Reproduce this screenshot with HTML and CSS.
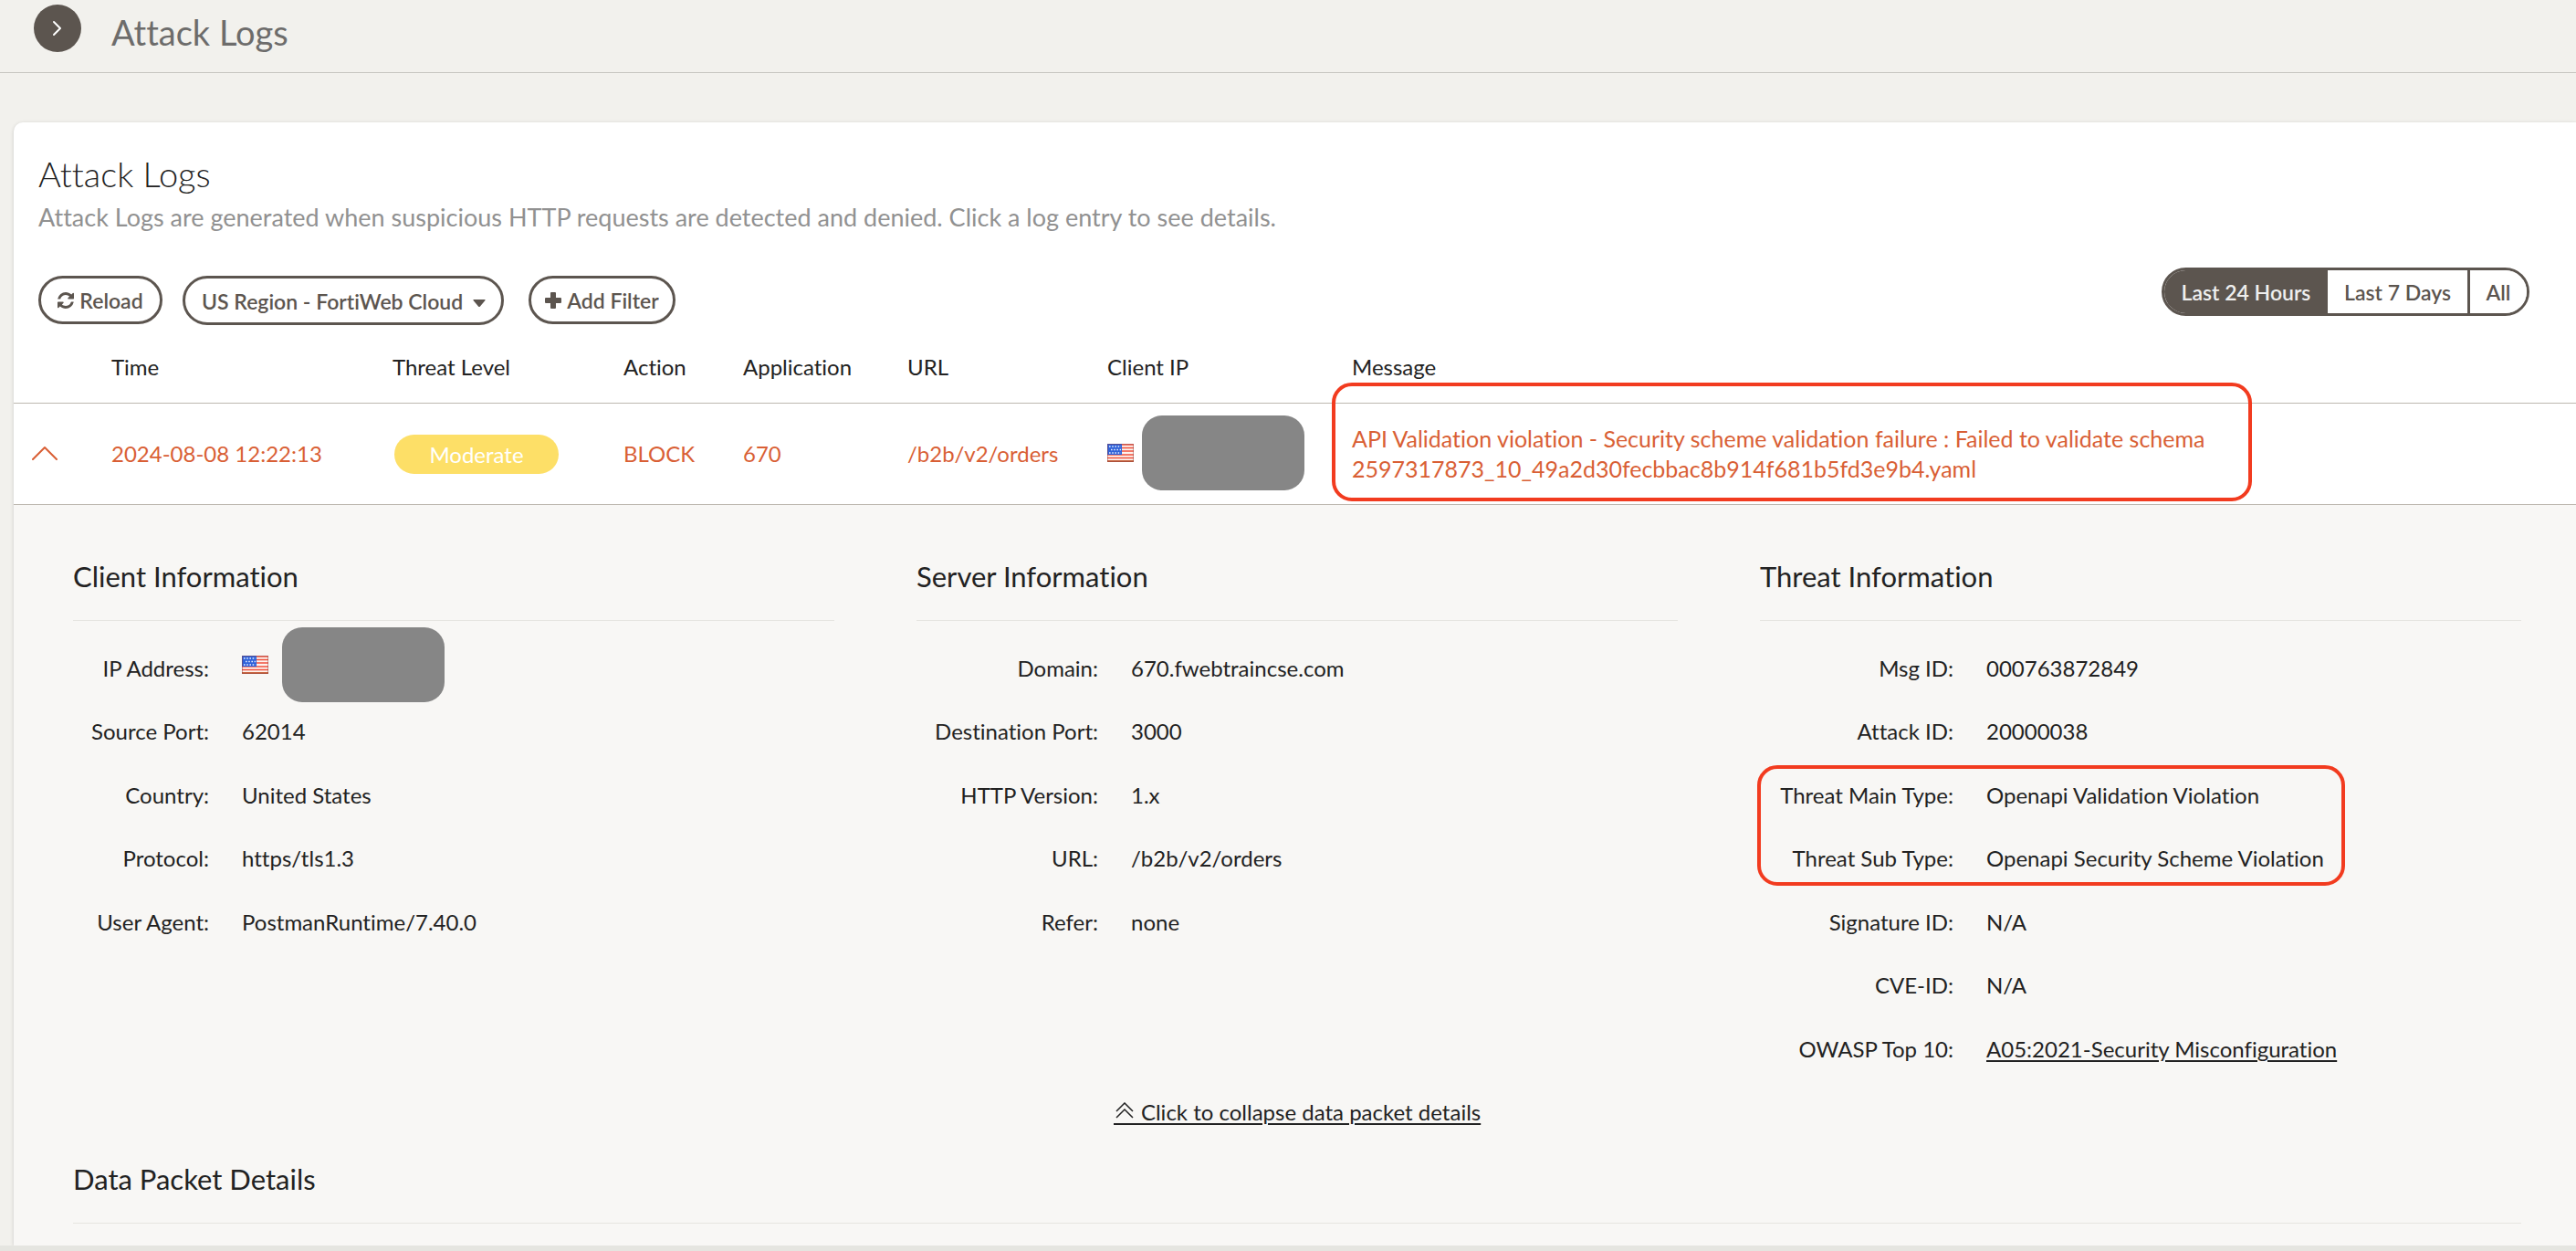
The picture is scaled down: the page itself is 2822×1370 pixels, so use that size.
FILE: index.html
```html
<!DOCTYPE html>
<html lang="en">
<head>
<meta charset="utf-8">
<meta name="viewport" content="width=device-width, initial-scale=1">
<title>Attack Logs</title>
<link rel="stylesheet" href="styles.css">
</head>
<body>
<svg class="sprite" aria-hidden="true">
  <symbol id="flag-us" viewBox="0 0 29 20">
    <rect width="29" height="20" fill="#fdf3ee"/>
    <path d="M0 1h29M0 4.500h29M0 8h29M0 12h29M0 15.500h29" stroke="#f0503c" stroke-width="1.600"/>
    <path d="M0 19h29" stroke="#c9653f" stroke-width="2"/>
    <rect width="16" height="12" fill="#2f62d9"/>
    <path d="M2 3h13M4 6.500h11M2 10h13" stroke="#e6eeff" stroke-width="1.600" stroke-dasharray="1.600 1.600"/>
    <rect x=".5" y=".5" width="28" height="19" fill="none" stroke="#8a3a3a" stroke-opacity=".45"/>
  </symbol>
</svg>
<header class="topbar">
  <button class="menu-toggle" type="button" aria-label="Open menu">
    <svg width="12" height="18" viewBox="0 0 12 18"><path d="M2 2l7 7-7 7" fill="none" stroke="#fff" stroke-width="2" stroke-linecap="round" stroke-linejoin="round"/></svg>
  </button>
  <h1 class="topbar-title">Attack Logs</h1>
</header>

<main class="card">
  <div class="card-head">
    <h2 class="card-title">Attack Logs</h2>
    <p class="card-text">Attack Logs are generated when suspicious HTTP requests are detected and denied. Click a log entry to see details.</p>
  </div>

  <div class="toolbar">
    <div class="tools">
      <button class="pill reload" type="button">
        <svg width="18" height="18" viewBox="0 0 1536 1536" fill="currentColor"><path d="M1511 928q0 5-1 7-64 268-268 434.500t-478 166.500q-146 0-282.500-55t-243.500-157l-129 129q-19 19-45 19t-45-19-19-45v-448q0-26 19-45t45-19h448q26 0 45 19t19 45-19 45l-137 137q71 66 161 102t187 36q134 0 250-65t186-179q11-17 53-117 8-23 30-23h192q13 0 22.500 9.500t9.500 22.500zm25-800v448q0 26-19 45t-45 19h-448q-26 0-45-19t-19-45 19-45l138-138q-148-137-349-137-134 0-250 65t-186 179q-11 17-53 117-8 23-30 23h-199q-13 0-22.500-9.500t-9.500-22.500v-7q65-268 270-434.500t480-166.500q146 0 284 55.500t245 156.500l130-129q19-19 45-19t45 19 19 45z"/></svg>
        Reload
      </button>
      <div class="region">
        <select class="pill region-select" aria-label="Region">
          <option>US Region - FortiWeb Cloud</option>
        </select>
        <svg class="region-caret" width="14" height="8" viewBox="0 0 14 8"><path d="M1 0h12q1 0 .5 1L8 7.500q-1 1-2 0L.5 1Q0 0 1 0z" fill="currentColor"/></svg>
      </div>
      <button class="pill add" type="button">
        <svg width="18" height="18" viewBox="0 0 18 18" fill="currentColor"><path d="M7 0h4q1 0 1 1v5h5q1 0 1 1v4q0 1-1 1h-5v5q0 1-1 1H7q-1 0-1-1v-5H1q-1 0-1-1V7q0-1 1-1h5V1q0-1 1-1z"/></svg>
        Add Filter
      </button>
    </div>
    <div class="ranges" role="group" aria-label="Time range">
      <button class="range range-day active" type="button" aria-pressed="true">Last 24 Hours</button>
      <button class="range range-week" type="button">Last 7 Days</button>
      <button class="range range-all" type="button">All</button>
    </div>
  </div>

  <table class="logs">
    <colgroup>
      <col class="col-toggle"><col class="col-time"><col class="col-level"><col class="col-action"><col class="col-app"><col class="col-url"><col class="col-ip"><col>
    </colgroup>
    <thead>
      <tr><th></th><th scope="col">Time</th><th scope="col">Threat Level</th><th scope="col">Action</th><th scope="col">Application</th><th scope="col">URL</th><th scope="col">Client IP</th><th scope="col">Message</th></tr>
    </thead>
    <tbody>
      <tr>
        <td>
          <button class="row-toggle" type="button" aria-label="Collapse entry">
            <svg width="30" height="16" viewBox="0 0 30 16"><path d="M2 15L15 2l13 13" fill="none" stroke="currentColor" stroke-width="2" stroke-linecap="round" stroke-linejoin="round"/></svg>
          </button>
        </td>
        <td>2024-08-08 12:22:13</td>
        <td><span class="badge">Moderate</span></td>
        <td>BLOCK</td>
        <td>670</td>
        <td>/b2b/v2/orders</td>
        <td>
          <div class="ip ip-row">
            <svg class="flag" width="29" height="20"><use href="#flag-us"/></svg>
            <span class="redacted"></span>
          </div>
        </td>
        <td class="message">
          <p class="message-text">API Validation violation - Security scheme validation failure : Failed to validate schema 2597317873_10_49a2d30fecbbac8b914f681b5fd3e9b4.yaml</p>
          <span class="mark mark-message"></span>
        </td>
      </tr>
    </tbody>
  </table>

  <section class="details">
    <div class="panels">
      <section class="panel panel-client">
        <h3 class="panel-title">Client Information</h3>
        <dl class="fields">
          <div class="field"><dt>IP Address:</dt><dd><div class="ip ip-detail"><svg class="flag" width="29" height="20"><use href="#flag-us"/></svg><span class="redacted"></span></div></dd></div>
          <div class="field"><dt>Source Port:</dt><dd>62014</dd></div>
          <div class="field"><dt>Country:</dt><dd>United States</dd></div>
          <div class="field"><dt>Protocol:</dt><dd>https/tls1.3</dd></div>
          <div class="field"><dt>User Agent:</dt><dd>PostmanRuntime/7.40.0</dd></div>
        </dl>
      </section>
      <section class="panel panel-server">
        <h3 class="panel-title">Server Information</h3>
        <dl class="fields">
          <div class="field"><dt>Domain:</dt><dd>670.fwebtraincse.com</dd></div>
          <div class="field"><dt>Destination Port:</dt><dd>3000</dd></div>
          <div class="field"><dt>HTTP Version:</dt><dd>1.x</dd></div>
          <div class="field"><dt>URL:</dt><dd>/b2b/v2/orders</dd></div>
          <div class="field"><dt>Refer:</dt><dd>none</dd></div>
        </dl>
      </section>
      <section class="panel panel-threat">
        <h3 class="panel-title">Threat Information</h3>
        <dl class="fields">
          <div class="field"><dt>Msg ID:</dt><dd>000763872849</dd></div>
          <div class="field"><dt>Attack ID:</dt><dd>20000038</dd></div>
          <div class="field"><dt>Threat Main Type:</dt><dd>Openapi Validation Violation<span class="mark mark-type"></span></dd></div>
          <div class="field"><dt>Threat Sub Type:</dt><dd>Openapi Security Scheme Violation</dd></div>
          <div class="field"><dt>Signature ID:</dt><dd>N/A</dd></div>
          <div class="field"><dt>CVE-ID:</dt><dd>N/A</dd></div>
          <div class="field"><dt>OWASP Top 10:</dt><dd><a class="link" href="#owasp">A05:2021-Security Misconfiguration</a></dd></div>
        </dl>
      </section>
    </div>
    <div class="collapse">
      <a class="link" href="#packet"><svg class="collapse-icon" width="24" height="25" viewBox="0 0 24 25"><path d="M3 10l9-9 9 9M3 17l9-9 9 9" fill="none" stroke="currentColor" stroke-width="1.500"/><path d="M0 24h24" stroke="currentColor" stroke-width="2"/></svg>&nbsp;Click to collapse data packet details</a>
    </div>
    <h3 class="panel-title" id="packet">Data Packet Details</h3>
  </section>
</main>
<footer class="footer"></footer>
</body>
</html>
```

FILE: styles.css
```css
* { box-sizing: border-box; }

body {
  margin: 0;
  min-height: 100vh;
  display: flex;
  flex-direction: column;
  background: #f2f1ed;
  color: #222;
  font-family: Lato, "Liberation Sans", sans-serif;
  font-size: 24px;
  line-height: 34px;
  font-variant-ligatures: none;
}

h1, h2, h3, p, dl, dd { margin: 0; font-weight: 400; }
button, select { font: inherit; font-variant-ligatures: none; color: inherit; cursor: pointer; }
.sprite { position: absolute; width: 0; height: 0; }

.topbar {
  display: flex;
  align-items: flex-start;
  height: 80px;
  padding: 5px 37px 0;
  gap: 33px;
  border-bottom: 1px solid #c6c5c0;
}
.menu-toggle {
  display: flex;
  align-items: center;
  justify-content: center;
  width: 52px;
  height: 52px;
  padding: 0;
  border: 0;
  border-radius: 50%;
  background: #5c554f;
}
.topbar-title {
  padding-top: 8px;
  font-size: 38px;
  line-height: 44px;
  color: #6d6c6b;
}

.card {
  flex: 1;
  display: flex;
  flex-direction: column;
  margin: 54px 0 0 15px;
  background: #fff;
  border-top-left-radius: 10px;
  box-shadow: 0 1px 4px rgba(0, 0, 0, .16);
}
.card-head { padding: 34px 27px 38px; }
.card-title { font-size: 38px; font-weight: 300; line-height: 44px; }
.card-text { padding-top: 9px; font-size: 27px; color: #919191; }

.toolbar {
  display: flex;
  align-items: flex-start;
  justify-content: space-between;
  padding: 0 51px 0 27px;
}
.tools {
  display: flex;
  align-items: flex-start;
  padding-top: 9px;
  color: #5c554f;
}
.pill {
  display: flex;
  align-items: center;
  justify-content: center;
  height: 53px;
  padding: 0 14px;
  gap: 6px;
  border: 3px solid #5c554f;
  border-radius: 27px;
  background: #fff;
  font-size: 23px;
  font-weight: 600;
  white-space: nowrap;
}
.pill svg { flex: none; }
.reload { width: 136px; }
.add { width: 161px; margin-left: 27px; }
.region { position: relative; margin-left: 22px; }
.region-select { width: 352px; height: 54px; padding: 2px 18px 0; appearance: none; }
.region-caret { position: absolute; right: 20px; top: 26px; pointer-events: none; }

.ranges {
  display: flex;
  height: 53px;
  border: 3px solid #5c554f;
  border-radius: 27px;
  overflow: hidden;
}
.range {
  padding: 0;
  border: 0;
  background: #fff;
  color: #5c554f;
  font-size: 23px;
  font-weight: 600;
}
.range-day { width: 179px; }
.range-week { width: 156px; border-right: 3px solid #5c554f; }
.range-all { width: 62px; }
.range.active { background: #5c554f; color: #eee; }

.logs { width: 100%; table-layout: fixed; border-spacing: 0; }
.col-toggle { width: 107px; }
.col-time { width: 308px; }
.col-level { width: 253px; }
.col-action { width: 131px; }
.col-app { width: 180px; }
.col-url { width: 219px; }
.col-ip { width: 268px; }
.logs th {
  padding: 29px 0 22px;
  border-bottom: 1px solid #bdb8b0;
  text-align: left;
  font-weight: 400;
}
.logs td {
  height: 111px;
  padding: 0;
  border-bottom: 1px solid #bdb8b0;
  color: #d95f35;
}
.row-toggle { display: flex; padding: 0 0 2px 19px; border: 0; background: none; }
.badge {
  display: block;
  width: 180px;
  margin-left: 2px;
  border-radius: 22px;
  background: #fddf67;
  color: #fff;
  text-align: center;
  line-height: 43px;
}
.ip { display: flex; align-items: center; padding-bottom: 2px; }
.ip-row { gap: 9px; }
.ip-detail { gap: 15px; padding-bottom: 8px; }
.flag { flex: none; }
.redacted { width: 178px; height: 82px; border-radius: 22px; background: #868686; }
.message { position: relative; }
.message-text { max-width: 960px; font-size: 25px; line-height: 33px; }

.mark {
  position: absolute;
  border: 4px solid #f23b1f;
  border-radius: 22px;
  pointer-events: none;
}
.mark-message { left: -22px; top: -23px; width: 1008px; height: 130px; }
.mark-type { left: -3px; top: 2px; width: 644px; height: 132px; }

.details { flex: 1; padding: 61px 60px 0 65px; background: #f8f7f5; }
.panels { display: grid; grid-template-columns: repeat(3, 1fr); gap: 90px; }
.panel-title {
  padding-bottom: 31px;
  border-bottom: 1px solid #e6e5e0;
  font-size: 31px;
}
.fields {
  display: grid;
  grid-template-rows: repeat(7, 1fr);
  min-height: 487px;
  margin-top: 17px;
}
.field { display: flex; align-items: center; gap: 36px; position: relative; height: 69px; }
.field dt { flex: none; text-align: right; white-space: nowrap; }
.panel-client dt { width: 149px; }
.panel-server dt { width: 199px; }
.panel-threat dt { width: 212px; }
.link { color: inherit; text-decoration: underline; text-underline-offset: 3px; text-decoration-thickness: 2px; }
.collapse { padding: 17px 0 39px; text-align: center; }
.collapse-icon { vertical-align: -5px; }

.footer { height: 6px; background: #e5e5e0; }
```
